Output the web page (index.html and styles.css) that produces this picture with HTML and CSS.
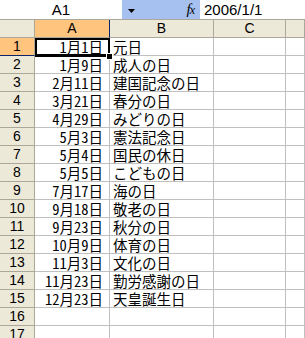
FILE: index.html
```html
<!DOCTYPE html>
<html lang="ja">
<head>
<meta charset="utf-8">
<link rel="stylesheet" href="styles.css">
</head>
<body>
<div class="app">
  <div class="fbar">
    <div class="namebox">A1</div>
    <div class="btnzone">
      <svg class="arrow" width="7" height="4" viewBox="0 0 7 4"><path d="M0 0H7L3.5 4Z" fill="#000"/></svg>
      <span class="fx">f<span class="fxx">x</span></span>
    </div>
    <div class="formula">2006/1/1</div>
  </div>
  <div class="sheet">
    <div class="hd corner"></div>
    <div class="hd colhd sel">A</div>
    <div class="hd colhd">B</div>
    <div class="hd colhd">C</div>
    <div class="hd colhd"></div>

    <div class="hd rowhd selr">1</div>
    <div class="c date active">1月1日<div class="selbox"></div><div class="handle"></div></div>
    <div class="c">元日</div><div class="c"></div><div class="c"></div>

    <div class="hd rowhd">2</div><div class="c date">1月9日</div><div class="c">成人の日</div><div class="c"></div><div class="c"></div>
    <div class="hd rowhd">3</div><div class="c date">2月11日</div><div class="c">建国記念の日</div><div class="c"></div><div class="c"></div>
    <div class="hd rowhd">4</div><div class="c date">3月21日</div><div class="c">春分の日</div><div class="c"></div><div class="c"></div>
    <div class="hd rowhd">5</div><div class="c date">4月29日</div><div class="c">みどりの日</div><div class="c"></div><div class="c"></div>
    <div class="hd rowhd">6</div><div class="c date">5月3日</div><div class="c">憲法記念日</div><div class="c"></div><div class="c"></div>
    <div class="hd rowhd">7</div><div class="c date">5月4日</div><div class="c">国民の休日</div><div class="c"></div><div class="c"></div>
    <div class="hd rowhd">8</div><div class="c date">5月5日</div><div class="c">こどもの日</div><div class="c"></div><div class="c"></div>
    <div class="hd rowhd">9</div><div class="c date">7月17日</div><div class="c">海の日</div><div class="c"></div><div class="c"></div>
    <div class="hd rowhd">10</div><div class="c date">9月18日</div><div class="c">敬老の日</div><div class="c"></div><div class="c"></div>
    <div class="hd rowhd">11</div><div class="c date">9月23日</div><div class="c">秋分の日</div><div class="c"></div><div class="c"></div>
    <div class="hd rowhd">12</div><div class="c date">10月9日</div><div class="c">体育の日</div><div class="c"></div><div class="c"></div>
    <div class="hd rowhd">13</div><div class="c date">11月3日</div><div class="c">文化の日</div><div class="c"></div><div class="c"></div>
    <div class="hd rowhd">14</div><div class="c date">11月23日</div><div class="c">勤労感謝の日</div><div class="c"></div><div class="c"></div>
    <div class="hd rowhd">15</div><div class="c date">12月23日</div><div class="c">天皇誕生日</div><div class="c"></div><div class="c"></div>
    <div class="hd rowhd">16</div><div class="c"></div><div class="c"></div><div class="c"></div><div class="c"></div>
    <div class="hd rowhd">17</div><div class="c"></div><div class="c"></div><div class="c"></div><div class="c"></div>
  </div>
</div>
</body>
</html>
```
FILE: styles.css
```css
html, body {
  margin: 0;
  padding: 0;
  background: #fff;
}
body {
  font-family: "Noto Sans CJK JP", "Liberation Sans", sans-serif;
  font-size: 14.5px;
  color: #000;
}
.app {
  width: 305px;
  height: 338px;
  overflow: hidden;
}
.fbar {
  display: flex;
  height: 19px;
  border-bottom: 1px solid #aca899;
  background: #fff;
}
.namebox {
  width: 122px;
  text-align: center;
  line-height: 19px;
  font-family: "Liberation Sans", sans-serif;
  font-size: 15px;
}
.btnzone {
  width: 78px;
  background: #a6c0f0;
  display: flex;
  align-items: center;
  padding: 0 6px 0 6px;
  box-sizing: border-box;
}
.arrow {
  display: block;
  margin-top: 2px;
}
.fx {
  margin-left: auto;
  font-family: "Liberation Serif", serif;
  font-style: italic;
  font-size: 15px;
  line-height: 19px;
  letter-spacing: -1px;
}
.fxx {
  font-size: 12px;
}
.formula {
  flex: 1;
  padding-left: 4px;
  line-height: 19px;
  font-family: "Liberation Sans", sans-serif;
  font-size: 15px;
}
.sheet {
  display: grid;
  grid-template-columns: 35px 75px 104px 72px 19px;
  grid-auto-rows: 18px;
}
.hd {
  background: #ece9d8;
  border-right: 1px solid #aca899;
  border-bottom: 1px solid #aca899;
  box-sizing: border-box;
  text-align: center;
  line-height: 17px;
  font-size: 14px;
  font-family: "Liberation Sans", sans-serif;
  color: #000;
}
.colhd.sel {
  background: #ffc57f;
  border-right-color: #0a246a;
}
.rowhd.selr {
  background: #ffc57f;
  border-bottom-color: #0a246a;
}
.c {
  border-right: 1px solid #c0c0c0;
  border-bottom: 1px solid #c0c0c0;
  box-sizing: border-box;
  line-height: 17px;
  padding-left: 3px;
  white-space: nowrap;
}
.c.date {
  text-align: right;
  padding-right: 6px;
  padding-left: 0;
  font-feature-settings: "hwid";
}
.c.active {
  position: relative;
}
.selbox {
  position: absolute;
  left: 0;
  top: 0;
  right: -1px;
  bottom: -2px;
  border: 2px solid #000;
  border-bottom-width: 3px;
}
.handle {
  position: absolute;
  left: 71px;
  top: 15px;
  width: 5px;
  height: 5px;
  background: #000;
  border: 1px solid #fff;
  z-index: 2;
}
```
